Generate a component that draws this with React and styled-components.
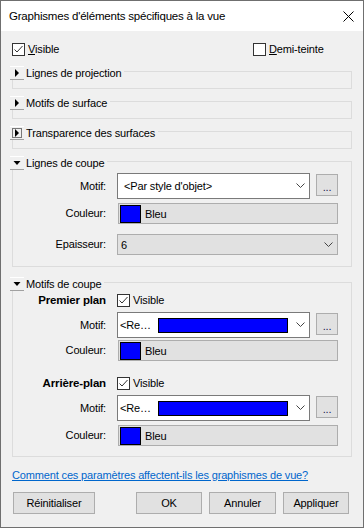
import React from 'react'
import styled, { createGlobalStyle } from 'styled-components'

const GlobalStyle = createGlobalStyle`
  html, body {
    margin: 0;
    padding: 0;
    background: #f0f0f0;
  }
  body {
    font-family: "Liberation Sans", Arial, sans-serif;
    font-size: 11px;
    letter-spacing: -0.15px;
    color: #000;
  }
`

const Window = styled.div`
  width: 364px;
  height: 528px;
  box-sizing: border-box;
  border: 1px solid #6f6f6f;
  background: #f0f0f0;
  display: flex;
  flex-direction: column;
`

const TitleBar = styled.div`
  height: 30px;
  flex: none;
  background: #fff;
  display: flex;
  align-items: center;
  justify-content: space-between;
  padding: 0 9px 0 8px;
`

const Title = styled.span`
  font-size: 11.5px;
  letter-spacing: -0.2px;
`

const Body = styled.div`
  padding: 12px 11px 0;
`

const TopRow = styled.div`
  display: grid;
  grid-template-columns: 241px auto;
  height: 13px;
`

const CheckLabel = styled.label`
  display: flex;
  align-items: center;
  gap: 3px;
  height: 13px;
  line-height: 13px;
`

const Box = styled.span`
  width: 13px;
  height: 13px;
  box-sizing: border-box;
  border: 1px solid #333;
  background: #fff;
  display: flex;
  align-items: center;
  justify-content: center;
  flex: none;
`

const Group = styled.div`
  margin-top: ${p => p.$mt}px;
  border: 1px solid #dcdcdc;
  padding-bottom: ${p => p.$pb}px;
`

const GroupHeader = styled.div`
  display: flex;
  align-items: center;
  gap: 2px;
  width: fit-content;
  height: 14px;
  margin: -6px 0 0 -3px;
  padding-right: 3px;
  background: #f0f0f0;
`

const Expander = styled.span`
  width: 14px;
  height: 14px;
  box-sizing: border-box;
  border-top: 1px solid #fff;
  border-bottom: 1px solid #a0a0a0;
  display: flex;
  align-items: center;
  justify-content: center;
`

const FieldRow = styled.div`
  display: grid;
  grid-template-columns: 93px 221px;
  column-gap: 11px;
  align-items: center;
  margin-top: ${p => p.$mt}px;
`

const FieldLabel = styled.span`
  text-align: right;
  line-height: 13px;
  font-weight: ${p => (p.$bold ? 700 : 400)};
  font-size: ${p => (p.$bold ? 11.5 : 11)}px;
`

const ComboLine = styled.div`
  display: flex;
  align-items: flex-start;
  gap: 6px;
`

const Combo = styled.div`
  width: ${p => p.$w}px;
  height: ${p => p.$h}px;
  box-sizing: border-box;
  border: 1px solid ${p => (p.$flat ? '#adadad' : '#7a7a7a')};
  background: ${p => (p.$flat ? '#e1e1e1' : '#fff')};
  display: flex;
  align-items: center;
  padding-left: ${p => p.$pl}px;
  padding-right: 4px;
`

const ComboText = styled.span`
  white-space: nowrap;
`

const Chevron = styled.svg`
  margin-left: auto;
  flex: none;
`

const PatternBar = styled.span`
  width: 130px;
  height: 15px;
  box-sizing: border-box;
  border: 1px solid #000;
  background: #0000ff;
  margin-left: 7px;
  flex: none;
`

const DotsButton = styled.div`
  width: 22px;
  height: 22px;
  margin-top: 1px;
  box-sizing: border-box;
  border: 1px solid #adadad;
  background: #e1e1e1;
  display: flex;
  align-items: center;
  justify-content: center;
  color: #202050;
  line-height: 1;
  padding-top: 4px;
`

const ColorField = styled.div`
  margin-left: 1px;
  height: 21px;
  box-sizing: border-box;
  border: 1px solid #adadad;
  background: #e1e1e1;
  display: flex;
  align-items: center;
  padding-left: 1px;
  gap: 4px;
`

const Swatch = styled.span`
  width: 21px;
  height: 18px;
  box-sizing: border-box;
  border: 1px solid #000;
  background: #0000ff;
`

const HelpLink = styled.a`
  display: block;
  margin-top: 11px;
  line-height: 14px;
  color: #0066cc;
  text-decoration: underline;
`

const ButtonRow = styled.div`
  display: flex;
  justify-content: space-between;
  margin-top: 10px;
  padding: 0 3px 0 1px;
`

const ButtonGroup = styled.div`
  display: flex;
  gap: 7px;
`

const Button = styled.button`
  width: ${p => p.$w}px;
  height: 22px;
  box-sizing: border-box;
  border: 1px solid #adadad;
  background: #e1e1e1;
  font-family: inherit;
  font-size: 11px;
  letter-spacing: inherit;
  color: #000;
  padding: 0;
`

const Check = () => (
  <Box>
    <svg width="11" height="11" viewBox="0 0 11 11">
      <polyline points="1.5,5.5 4,8 9.5,2" fill="none" stroke="#333" strokeWidth="1" />
    </svg>
  </Box>
)

const CheckBox = ({ checked, children }) => (
  <CheckLabel>
    {checked ? <Check /> : <Box />}
    <span>{children}</span>
  </CheckLabel>
)

const Arrow = ({ open, focus }) => (
  <svg width="10" height="10" viewBox="0 0 10 10">
    {focus && (
      <rect x="0.5" y="0.5" width="9" height="9" fill="none" stroke="#000" strokeWidth="1" strokeDasharray="1 1" />
    )}
    {open ? <polygon points="1.5,3 8.5,3 5,7" fill="#000" /> : <polygon points="3,1 3,9 7,5" fill="#000" />}
  </svg>
)

const Section = ({ title, open, focus, mt, pb, children }) => (
  <Group $mt={mt} $pb={pb}>
    <GroupHeader>
      <Expander>
        <Arrow open={open} focus={focus} />
      </Expander>
      <span>{title}</span>
    </GroupHeader>
    {children}
  </Group>
)

const Down = () => (
  <Chevron width="9" height="6" viewBox="0 0 9 6">
    <polyline points="0.5,0.5 4.5,4.5 8.5,0.5" fill="none" stroke="#444" strokeWidth="1" />
  </Chevron>
)

const MotifRow = ({ mt, children }) => (
  <FieldRow $mt={mt}>
    <FieldLabel>Motif:</FieldLabel>
    <ComboLine>
      {children}
      <DotsButton>...</DotsButton>
    </ComboLine>
  </FieldRow>
)

const ColorRow = ({ mt }) => (
  <FieldRow $mt={mt}>
    <FieldLabel>Couleur:</FieldLabel>
    <ColorField>
      <Swatch />
      <span>Bleu</span>
    </ColorField>
  </FieldRow>
)

const PlaneBlock = ({ label, mt }) => (
  <>
    <FieldRow $mt={mt}>
      <FieldLabel $bold>{label}</FieldLabel>
      <CheckBox checked>Visible</CheckBox>
    </FieldRow>
    <MotifRow mt={5}>
      <Combo $w={193} $h={26} $pl={2}>
        <ComboText>&lt;Re…</ComboText>
        <PatternBar />
        <Down />
      </Combo>
    </MotifRow>
  </>
)

export default function App() {
  return (
    <>
      <GlobalStyle />
      <Window>
        <TitleBar>
          <Title>Graphismes d'éléments spécifiques à la vue</Title>
          <svg width="11" height="11" viewBox="0 0 11 11">
            <path d="M0.5 0.5 L10.5 10.5 M10.5 0.5 L0.5 10.5" stroke="#000" strokeWidth="1" />
          </svg>
        </TitleBar>
        <Body>
          <TopRow>
            <CheckBox checked><u>V</u>isible</CheckBox>
            <CheckBox><u>D</u>emi-teinte</CheckBox>
          </TopRow>

          <Section title="Lignes de projection" mt={15} pb={8} />
          <Section title="Motifs de surface" mt={12} pb={8} />
          <Section title="Transparence des surfaces" mt={12} pb={8} focus />

          <Section title="Lignes de coupe" open mt={12} pb={11}>
            <MotifRow mt={3}>
              <Combo $w={193} $h={26} $pl={6}>
                <ComboText>&lt;Par style d'objet&gt;</ComboText>
                <Down />
              </Combo>
            </MotifRow>
            <ColorRow mt={4} />
            <FieldRow $mt={10}>
              <FieldLabel>Epaisseur:</FieldLabel>
              <Combo $w={221} $h={21} $pl={3} $flat>
                <ComboText>6</ComboText>
                <Down />
              </Combo>
            </FieldRow>
          </Section>

          <Section title="Motifs de coupe" open mt={15} pb={10}>
            <PlaneBlock label="Premier plan" mt={3} />
            <ColorRow mt={2} />
            <PlaneBlock label="Arrière-plan" mt={16} />
            <ColorRow mt={4} />
          </Section>

          <HelpLink href="#">Comment ces paramètres affectent-ils les graphismes de vue?</HelpLink>

          <ButtonRow>
            <Button $w={82}>Réinitialiser</Button>
            <ButtonGroup>
              <Button $w={66}>OK</Button>
              <Button $w={67}>Annuler</Button>
              <Button $w={66}>Appliquer</Button>
            </ButtonGroup>
          </ButtonRow>
        </Body>
      </Window>
    </>
  )
}
